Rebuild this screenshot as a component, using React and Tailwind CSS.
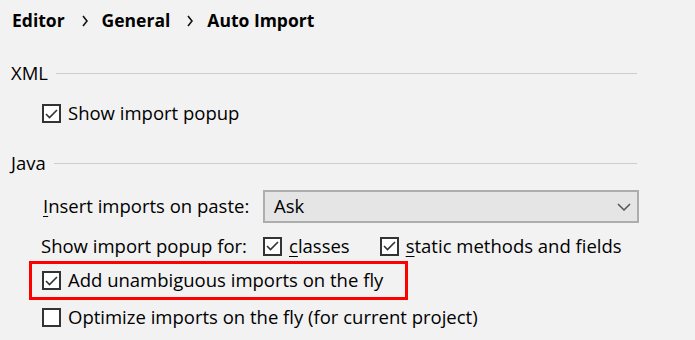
import React from 'react';

const Check = ({ checked, size = 19 }) => (
  <span
    className="flex items-center justify-center shrink-0 bg-white border-2 border-[#333333]"
    style={{ width: size, height: size }}
  >
    {checked && (
      <svg width="13" height="10" viewBox="0 0 13 10" fill="none">
        <polyline points="1,5 4.5,8.5 12,1" stroke="#333333" strokeWidth="1.6" />
      </svg>
    )}
  </span>
);

const Chevron = () => (
  <svg width="6" height="12" viewBox="0 0 6 12" className="ml-[17px] mr-[14px]">
    <polyline points="1,1 5,6 1,11" fill="none" stroke="#111111" strokeWidth="1.6" />
  </svg>
);

const Section = ({ title }) => (
  <div className="flex items-center h-[20px] gap-[8px]">
    <span>{title}</span>
    <div className="flex-1 h-px bg-[#cdcdcd]" />
  </div>
);

export default function App() {
  return (
    <div
      className="w-[695px] h-[340px] bg-[#f2f2f2] text-black text-[18.5px] leading-none overflow-hidden"
      style={{ fontFamily: '"Open Sans", "Noto Sans", sans-serif' }}
    >
      <div className="flex items-center h-[40px] pt-[2px] pl-[12px] font-bold text-[17.5px]">
        <span>Editor</span>
        <Chevron />
        <span>General</span>
        <Chevron />
        <span>Auto Import</span>
      </div>

      <div className="pl-[11px] pr-[58px]">
        <div className="mt-[23px]">
          <Section title="XML" />
        </div>

        <div className="flex items-center gap-[7px] pl-[31px] h-[21px] mt-[20px]">
          <Check checked />
          <span>Show import popup</span>
        </div>

        <div className="mt-[29px]">
          <Section title="Java" />
        </div>

        <div className="flex items-center pl-[32px] mt-[17px]">
          <span className="w-[220px]">
            <span className="underline underline-offset-[3px]">I</span>nsert imports on paste:
          </span>
          <div className="flex-1 mr-[-2px] h-[33px] flex items-center justify-between bg-[#e5e5e5] border-2 border-[#adadad] pl-[9px] pr-[6px]">
            <span>Ask</span>
            <svg width="14" height="8" viewBox="0 0 14 8">
              <polyline points="1,1 7,7 13,1" fill="none" stroke="#555555" strokeWidth="1.5" />
            </svg>
          </div>
        </div>

        <div className="flex items-center pl-[30px] h-[20px] mt-[13px]">
          <span className="w-[222px]">Show import popup for:</span>
          <Check checked />
          <span className="ml-[7px]">
            <span className="underline underline-offset-[3px]">c</span>lasses
          </span>
          <span className="ml-[30px]"><Check checked /></span>
          <span className="ml-[7px]">
            <span className="underline underline-offset-[3px]">s</span>tatic methods and fields
          </span>
        </div>
      </div>

      <div className="ml-[29px] mt-[5px] w-fit flex items-center gap-[7px] h-[39px] border-[3px] border-[#ff0000] pl-[10px] pr-[22px]">
        <Check checked />
        <span>Add unambiguous imports on the fly</span>
      </div>

      <div className="flex items-center gap-[7px] pl-[42px] h-[20px] mt-[7px]">
        <Check />
        <span>Optimize imports on the fly (for current project)</span>
      </div>
    </div>
  );
}
